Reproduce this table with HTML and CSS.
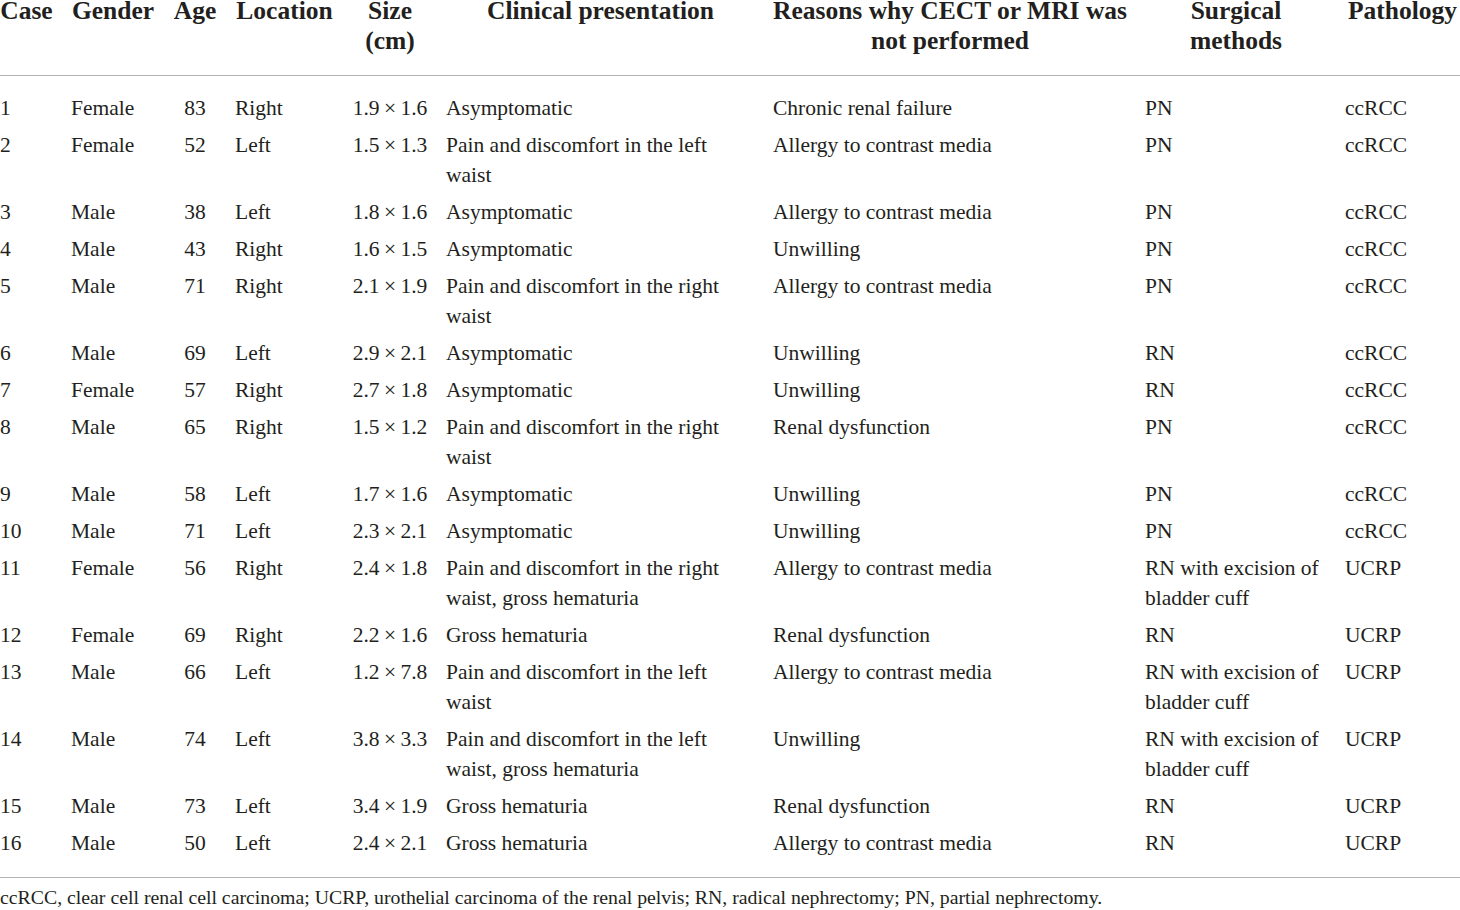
FILE: index.html
```html
<!DOCTYPE html>
<html lang="en-us">
<head>
    <meta charset="UTF-8">
    <meta name="viewport" content="width=device-width, initial-scale=1.0">
    <title>Patient characteristics</title>
    <link rel="stylesheet" href="styles.css">
</head>
<body>
    <div class="page">
        <table class="cases">
            <colgroup>
                <col class="c_case">
                <col class="c_gender">
                <col class="c_age">
                <col class="c_loc">
                <col class="c_size">
                <col class="c_clin">
                <col class="c_reason">
                <col class="c_surg">
                <col class="c_path">
            </colgroup>
            <thead>
                <tr>
                    <th>Case</th>
                    <th>Gender</th>
                    <th>Age</th>
                    <th>Location</th>
                    <th>Size<br>(cm)</th>
                    <th>Clinical presentation</th>
                    <th>Reasons why CECT or MRI was<br>not performed</th>
                    <th>Surgical<br>methods</th>
                    <th>Pathology</th>
                </tr>
            </thead>
            <tbody>
                <tr><td>1</td><td>Female</td><td class="mid">83</td><td>Right</td><td class="size">1.9 × 1.6</td><td class="clin">Asymptomatic</td><td>Chronic renal failure</td><td class="surg">PN</td><td>ccRCC</td></tr>
                <tr><td>2</td><td>Female</td><td class="mid">52</td><td>Left</td><td class="size">1.5 × 1.3</td><td class="clin">Pain and discomfort in the left waist</td><td>Allergy to contrast media</td><td class="surg">PN</td><td>ccRCC</td></tr>
                <tr><td>3</td><td>Male</td><td class="mid">38</td><td>Left</td><td class="size">1.8 × 1.6</td><td class="clin">Asymptomatic</td><td>Allergy to contrast media</td><td class="surg">PN</td><td>ccRCC</td></tr>
                <tr><td>4</td><td>Male</td><td class="mid">43</td><td>Right</td><td class="size">1.6 × 1.5</td><td class="clin">Asymptomatic</td><td>Unwilling</td><td class="surg">PN</td><td>ccRCC</td></tr>
                <tr><td>5</td><td>Male</td><td class="mid">71</td><td>Right</td><td class="size">2.1 × 1.9</td><td class="clin">Pain and discomfort in the right waist</td><td>Allergy to contrast media</td><td class="surg">PN</td><td>ccRCC</td></tr>
                <tr><td>6</td><td>Male</td><td class="mid">69</td><td>Left</td><td class="size">2.9 × 2.1</td><td class="clin">Asymptomatic</td><td>Unwilling</td><td class="surg">RN</td><td>ccRCC</td></tr>
                <tr><td>7</td><td>Female</td><td class="mid">57</td><td>Right</td><td class="size">2.7 × 1.8</td><td class="clin">Asymptomatic</td><td>Unwilling</td><td class="surg">RN</td><td>ccRCC</td></tr>
                <tr><td>8</td><td>Male</td><td class="mid">65</td><td>Right</td><td class="size">1.5 × 1.2</td><td class="clin">Pain and discomfort in the right waist</td><td>Renal dysfunction</td><td class="surg">PN</td><td>ccRCC</td></tr>
                <tr><td>9</td><td>Male</td><td class="mid">58</td><td>Left</td><td class="size">1.7 × 1.6</td><td class="clin">Asymptomatic</td><td>Unwilling</td><td class="surg">PN</td><td>ccRCC</td></tr>
                <tr><td>10</td><td>Male</td><td class="mid">71</td><td>Left</td><td class="size">2.3 × 2.1</td><td class="clin">Asymptomatic</td><td>Unwilling</td><td class="surg">PN</td><td>ccRCC</td></tr>
                <tr><td>11</td><td>Female</td><td class="mid">56</td><td>Right</td><td class="size">2.4 × 1.8</td><td class="clin">Pain and discomfort in the right waist, gross hematuria</td><td>Allergy to contrast media</td><td class="surg">RN with excision of bladder cuff</td><td>UCRP</td></tr>
                <tr><td>12</td><td>Female</td><td class="mid">69</td><td>Right</td><td class="size">2.2 × 1.6</td><td class="clin">Gross hematuria</td><td>Renal dysfunction</td><td class="surg">RN</td><td>UCRP</td></tr>
                <tr><td>13</td><td>Male</td><td class="mid">66</td><td>Left</td><td class="size">1.2 × 7.8</td><td class="clin">Pain and discomfort in the left waist</td><td>Allergy to contrast media</td><td class="surg">RN with excision of bladder cuff</td><td>UCRP</td></tr>
                <tr><td>14</td><td>Male</td><td class="mid">74</td><td>Left</td><td class="size">3.8 × 3.3</td><td class="clin">Pain and discomfort in the left waist, gross hematuria</td><td>Unwilling</td><td class="surg">RN with excision of bladder cuff</td><td>UCRP</td></tr>
                <tr><td>15</td><td>Male</td><td class="mid">73</td><td>Left</td><td class="size">3.4 × 1.9</td><td class="clin">Gross hematuria</td><td>Renal dysfunction</td><td class="surg">RN</td><td>UCRP</td></tr>
                <tr><td>16</td><td>Male</td><td class="mid">50</td><td>Left</td><td class="size">2.4 × 2.1</td><td class="clin">Gross hematuria</td><td>Allergy to contrast media</td><td class="surg">RN</td><td>UCRP</td></tr>
            </tbody>
        </table>
        <p class="note">ccRCC, clear cell renal cell carcinoma; UCRP, urothelial carcinoma of the renal pelvis; RN, radical nephrectomy; PN, partial nephrectomy.</p>
    </div>
</body>
</html>
```

FILE: styles.css
```css
* {
    margin: 0;
    padding: 0;
    box-sizing: border-box;
}

body {
    background: #fff;
    color: #231f20;
    font-family: "Liberation Serif", "Times New Roman", serif;
    overflow: hidden;
}

.page {
    width: 1460px;
}

.cases {
    width: 1460px;
    table-layout: fixed;
    border-collapse: collapse;
    margin-top: -4px;
}

.c_case { width: 62px; }
.c_gender { width: 102px; }
.c_age { width: 62px; }
.c_loc { width: 117px; }
.c_size { width: 94px; }
.c_clin { width: 327px; }
.c_reason { width: 372px; }
.c_surg { width: 200px; }
.c_path { width: 124px; }

.cases th {
    font-size: 25.5px;
    font-weight: bold;
    line-height: 30px;
    text-align: center;
    vertical-align: top;
    white-space: nowrap;
    padding: 0 9px 19px;
    border-bottom: 1px solid #b1b3b6;
}

.cases td {
    font-size: 21.5px;
    line-height: 30px;
    text-align: left;
    vertical-align: top;
    padding: 3px 9px 4px;
}

.cases th:first-child,
.cases td:first-child {
    padding-left: 0;
}

.cases th:last-child,
.cases td:last-child {
    padding-right: 0;
}

.cases td.mid {
    text-align: center;
}

.cases td.size {
    text-align: center;
    white-space: nowrap;
    word-spacing: -1px;
    padding-left: 0;
    padding-right: 0;
}

.cases td.clin {
    padding-right: 27px;
}

.cases td.surg {
    padding-right: 0;
}

.cases tbody tr:first-child td {
    padding-top: 17px;
}

.cases tbody tr:last-child td {
    padding-bottom: 19px;
    border-bottom: 1px solid #b1b3b6;
}

.note {
    font-size: 19.8px;
    line-height: 24px;
    margin-top: 7px;
}
```
